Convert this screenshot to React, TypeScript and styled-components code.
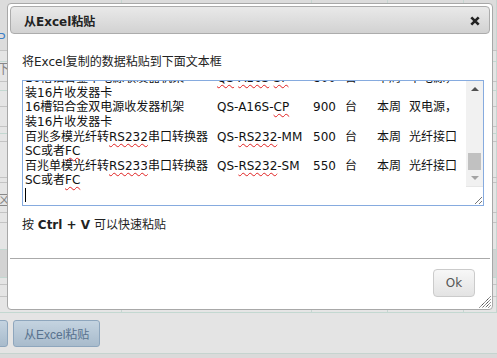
import React, { useLayoutEffect, useRef } from 'react';
import styled, { createGlobalStyle } from 'styled-components';

const GlobalStyle = createGlobalStyle`
  html, body {
    margin: 0;
    padding: 0;
  }
  body {
    width: 497px;
    height: 358px;
    overflow: hidden;
    background: #e4e4e4;
    color: #222;
    font-family: 'DejaVu Sans', 'Noto Sans CJK SC', sans-serif;
    font-size: 12px;
  }
`;

type GridRow = {
  h: number;
  line: 'grey' | 'teal';
  shade?: string;
  lead?: string;
  leadColor?: string;
};

// rows of the list that sits behind the dialog
const gridRows: GridRow[] = [
  { h: 51, line: 'grey', shade: '#dcdcdc', lead: 'P', leadColor: '#3d7fc6' },
  { h: 11, line: 'teal' },
  { h: 20, line: 'grey', lead: '下', leadColor: '#888' },
  { h: 9, line: 'teal' },
  { h: 16, line: 'grey' },
  { h: 20, line: 'grey' },
  { h: 7, line: 'teal' },
  { h: 8, line: 'grey' },
  { h: 36, line: 'grey' },
  { h: 5, line: 'grey' },
  { h: 30, line: 'grey', lead: '区', leadColor: '#888' },
  { h: 10, line: 'grey' },
  { h: 27, line: 'teal' },
  { h: 28, line: 'teal', shade: '#d3d3d3' },
  { h: 7, line: 'grey' },
  { h: 12, line: 'grey' },
  { h: 16, line: 'teal' },
];

const columns = [122, 190, 76, 76];

// [[...]] marks a word the spell checker underlines
const pasted: string[] = [
  '百兆单模单纤光纤收发器\tQS-[[FS]]-20A\t180\t台\t本周\tSC接口，',
  '传输20公里',
  '百兆单模单纤光纤收发器\tQS-[[FS]]-20B\t180\t台\t本周\tSC接口，',
  '传输20公里',
  '百兆多模双纤光纤收发器\tQS-[[FM]]-2\t160\t台\t本周\tSC接口，',
  '传输2公里',
  '千兆单模单纤光纤收发器\tQS-[[GS]]-20A\t320\t台\t本周\tSC接口，',
  '传输20公里',
  '千兆单模单纤光纤收发器\tQS-[[GS]]-20B\t320\t台\t本周\tSC接口，',
  '传输20公里',
  '千兆多模双纤光纤收发器\tQS-[[GM]]-550\t300\t台\t本周\tSC接口，',
  '传输550米',
  '千兆SFP光模块单模\tQS-SFP-LX\t150\t个\t本周\tLC接口，',
  '传输10公里',
  '千兆SFP光模块多模\tQS-SFP-SX\t120\t个\t本周\tLC接口，',
  '传输550米',
  '光纤收发器电源适配器\tQS-PWR-5V\t25\t个\t本周\t5V输出，',
  '配国标插头',
  '4口百兆光纤交换机\tQS-[[FS4]]-1F\t450\t台\t本周\t1光4电，',
  '单模单纤',
  '8口千兆光纤交换机\tQS-[[GS8]]-2F\t880\t台\t下周\t2光8电，',
  '支持VLAN',
  '14槽铝合金单电源收发器机架\tQS-[[A14S]]-[[SP]]\t700\t台\t本周\t单电源，',
  '装14片收发器卡',
  '16槽铝合金单电源收发器机架\t[[QS]]-[[A16S]]-[[SP]]\t800\t台\t本周\t单电源，',
  '装16片收发器卡',
  '16槽铝合金双电源收发器机架\tQS-A16S-[[CP]]\t900\t台\t本周\t双电源，',
  '装16片收发器卡',
  '百兆多模光纤转[[RS232]]串口转换器\tQS-[[RS232]]-MM\t500\t台\t本周\t光纤接口',
  'SC或者[[FC]]',
  '百兆单模光纤转[[RS233]]串口转换器\tQS-[[RS232]]-SM\t550\t台\t本周\t光纤接口',
  'SC或者[[FC]]',
];

const renderLine = (text: string) =>
  text.split(/(\[\[.*?\]\])/).map((part, i) =>
    part.startsWith('[[') ? (
      <Misspelt key={i}>{part.slice(2, -2)}</Misspelt>
    ) : (
      <React.Fragment key={i}>{part}</React.Fragment>
    )
  );

const CloseIcon = () => (
  <svg width="10" height="10" viewBox="0 0 10 10">
    <path d="M1.3 1.3 L8.7 8.7 M8.7 1.3 L1.3 8.7" stroke="#222" strokeWidth="2.6" />
  </svg>
);

const GripIcon = ({ color = '#333' }: { color?: string }) => (
  <svg width="12" height="12" viewBox="0 0 12 12">
    <path
      d="M11.5 0.5 L0.5 11.5 M11.5 3.5 L3.5 11.5 M11.5 6.5 L6.5 11.5 M11.5 9.5 L9.5 11.5"
      stroke={color}
      strokeWidth="1"
      strokeDasharray="1.2 0.6"
    />
  </svg>
);

const Arrow = ({ up, color }: { up?: boolean; color: string }) => (
  <svg width="8" height="4" viewBox="0 0 8 4">
    <path d={up ? 'M0 4 L4 0 L8 4 Z' : 'M0 0 L8 0 L4 4 Z'} fill={color} />
  </svg>
);

const CornerGrip = () => (
  <svg width="8" height="8" viewBox="0 0 8 8">
    <path d="M8 1 L1 8 M8 5 L5 8" stroke="#777" strokeWidth="1" />
  </svg>
);

const App = () => {
  const viewRef = useRef<HTMLDivElement>(null);

  useLayoutEffect(() => {
    const el = viewRef.current;
    if (el) el.scrollTop = el.scrollHeight;
  }, []);

  return (
    <>
      <GlobalStyle />
      <Page>
        <Grid>
          {gridRows.map((row, i) => (
            <Row key={i} $h={row.h} $line={row.line} $shade={row.shade}>
              {columns.map((w, c) => (
                <Cell key={c} $w={w}>
                  {c === 0 && row.lead && <Lead $color={row.leadColor}>{row.lead}</Lead>}
                </Cell>
              ))}
              <Cell />
            </Row>
          ))}
        </Grid>
        <Toolbar>
          <CutButton>导入数据</CutButton>
          <ToolButton>从Excel粘贴</ToolButton>
        </Toolbar>
        <FooterStrip />

        <Dialog>
          <TitleBar>
            <Title>从Excel粘贴</Title>
            <CloseButton>
              <CloseIcon />
            </CloseButton>
          </TitleBar>
          <Content>
            <Hint>将Excel复制的数据粘贴到下面文本框</Hint>
            <PasteBox>
              <TextView ref={viewRef}>
                {pasted.map((line, i) => (
                  <Line key={i}>{renderLine(line)}</Line>
                ))}
                <Line>
                  <Caret />
                </Line>
              </TextView>
              <ScrollBar>
                <ScrollButton>
                  <Arrow up color="#505050" />
                </ScrollButton>
                <Track>
                  <Thumb />
                </Track>
                <ScrollButton>
                  <Arrow color="#a3a3a3" />
                </ScrollButton>
                <Corner>
                  <CornerGrip />
                </Corner>
              </ScrollBar>
            </PasteBox>
            <Tip>
              按 <Keys>Ctrl + V</Keys> 可以快速粘贴
            </Tip>
          </Content>
          <ButtonPane>
            <OkButton>Ok</OkButton>
          </ButtonPane>
          <Grip>
            <GripIcon />
          </Grip>
        </Dialog>
      </Page>
    </>
  );
};

const Page = styled.div`
  position: relative;
  width: 497px;
  height: 358px;
  display: flex;
  flex-direction: column;
`;

const Grid = styled.div`
  display: flex;
  flex-direction: column;
`;

const Row = styled.div<{ $h: number; $line: 'grey' | 'teal'; $shade?: string }>`
  display: flex;
  box-sizing: border-box;
  height: ${(p) => p.$h}px;
  background: ${(p) => p.$shade || '#e5e5e5'};
  border-bottom: 1px solid ${(p) => (p.$line === 'teal' ? '#c3d8d1' : '#c4c4c4')};
`;

const Cell = styled.div<{ $w?: number }>`
  ${(p) => (p.$w ? `width: ${p.$w}px;` : 'flex: 1;')}
  box-sizing: border-box;
  display: flex;
  align-items: flex-end;
  overflow: hidden;
  border-right: 1px solid #c6d6d1;
`;

const Lead = styled.span<{ $color?: string }>`
  margin-left: -3px;
  padding-bottom: 6px;
  font-family: 'Liberation Sans', 'Noto Sans CJK SC', sans-serif;
  font-size: 13px;
  line-height: 13px;
  white-space: nowrap;
  color: ${(p) => p.$color || '#666'};
`;

const Toolbar = styled.div`
  display: flex;
  gap: 5px;
  height: 40px;
  box-sizing: border-box;
  padding-top: 7px;
`;

const ToolButton = styled.button`
  height: 27px;
  box-sizing: border-box;
  padding: 0 10px;
  border: 1px solid #8ea6bd;
  border-radius: 3px;
  background: linear-gradient(#c4d3e0, #a8bbcc);
  color: #58728e;
  font-family: 'Liberation Sans', 'Noto Sans CJK SC', sans-serif;
  font-size: 12px;
  white-space: nowrap;
`;

const CutButton = styled(ToolButton)`
  margin-left: -80px;
  width: 88px;
  overflow: hidden;
`;

const FooterStrip = styled.div`
  flex: 1;
  border-top: 1px solid #c6d4cf;
  background: #dadada;
`;

const Dialog = styled.div`
  position: absolute;
  left: 7px;
  top: 3px;
  width: 486px;
  height: 307px;
  box-sizing: border-box;
  display: flex;
  flex-direction: column;
  padding: 2px;
  border: 1px solid #a8a8a8;
  border-radius: 4px;
  background: #fff;
`;

const TitleBar = styled.div`
  height: 28px;
  flex: none;
  box-sizing: border-box;
  display: flex;
  align-items: center;
  justify-content: space-between;
  padding: 1px 9px 0 13px;
  border: 1px solid #acacac;
  border-radius: 4px;
  background: linear-gradient(#e9e9e9, #d2d2d2);
`;

const Title = styled.span`
  font-weight: bold;
  font-size: 12px;
  color: #222;
`;

const CloseButton = styled.span`
  display: flex;
  width: 10px;
  height: 10px;
`;

const Content = styled.div`
  flex: 1;
  padding: 20px 0 0 12px;
`;

const Hint = styled.p`
  margin: 0 0 10px;
  line-height: 16px;
  color: #222;
`;

const PasteBox = styled.div`
  display: flex;
  width: 462px;
  height: 126px;
  box-sizing: border-box;
  border: 1px solid #86abdf;
  background: #fff;
`;

const TextView = styled.div`
  flex: 1;
  min-width: 0;
  box-sizing: border-box;
  padding: 2px;
  overflow: hidden;
  font-family: 'DejaVu Sans', 'Noto Sans CJK SC', sans-serif;
  font-size: 12px;
  line-height: 14.6px;
  color: #111;
  tab-size: 32px;
`;

const Line = styled.div`
  height: 14.6px;
  white-space: pre;
`;

const Misspelt = styled.span`
  text-decoration: underline wavy #e02020;
  text-decoration-thickness: 1px;
  text-underline-offset: 2px;
  text-decoration-skip-ink: none;
`;

const Caret = styled.span`
  display: inline-block;
  width: 1px;
  height: 14px;
  vertical-align: -3px;
  background: #000;
`;

const ScrollBar = styled.div`
  flex: none;
  width: 17px;
  display: flex;
  flex-direction: column;
  background: #f1f1f1;
`;

const ScrollButton = styled.div`
  height: 16px;
  display: flex;
  align-items: center;
  justify-content: center;
`;

const Track = styled.div`
  flex: 1;
  display: flex;
  flex-direction: column;
  justify-content: flex-end;
  padding: 0 2px;
`;

const Thumb = styled.div`
  height: 17px;
  background: #c1c1c1;
`;

const Corner = styled.div`
  height: 19px;
  box-sizing: border-box;
  display: flex;
  align-items: flex-end;
  justify-content: flex-end;
  padding: 0 1px 1px 0;
  border-top: 1px solid #e6e6e6;
  background: #fff;
`;

const Tip = styled.p`
  margin: 11px 0 0;
  line-height: 16px;
  color: #222;
`;

const Keys = styled.b`
  font-weight: bold;
`;

const ButtonPane = styled.div`
  flex: none;
  display: flex;
  justify-content: flex-end;
  padding: 10px 15px;
  border-top: 1px solid #aaa;
`;

const OkButton = styled.button`
  width: 42px;
  height: 28px;
  box-sizing: border-box;
  padding: 0;
  border: 1px solid #cbcbcb;
  border-radius: 4px;
  background: linear-gradient(#f7f7f7, #e3e3e3);
  color: #555;
  font-family: 'DejaVu Sans', sans-serif;
  font-size: 12px;
`;

const Grip = styled.span`
  position: absolute;
  right: 1px;
  bottom: 1px;
  display: flex;
`;

export default App;
